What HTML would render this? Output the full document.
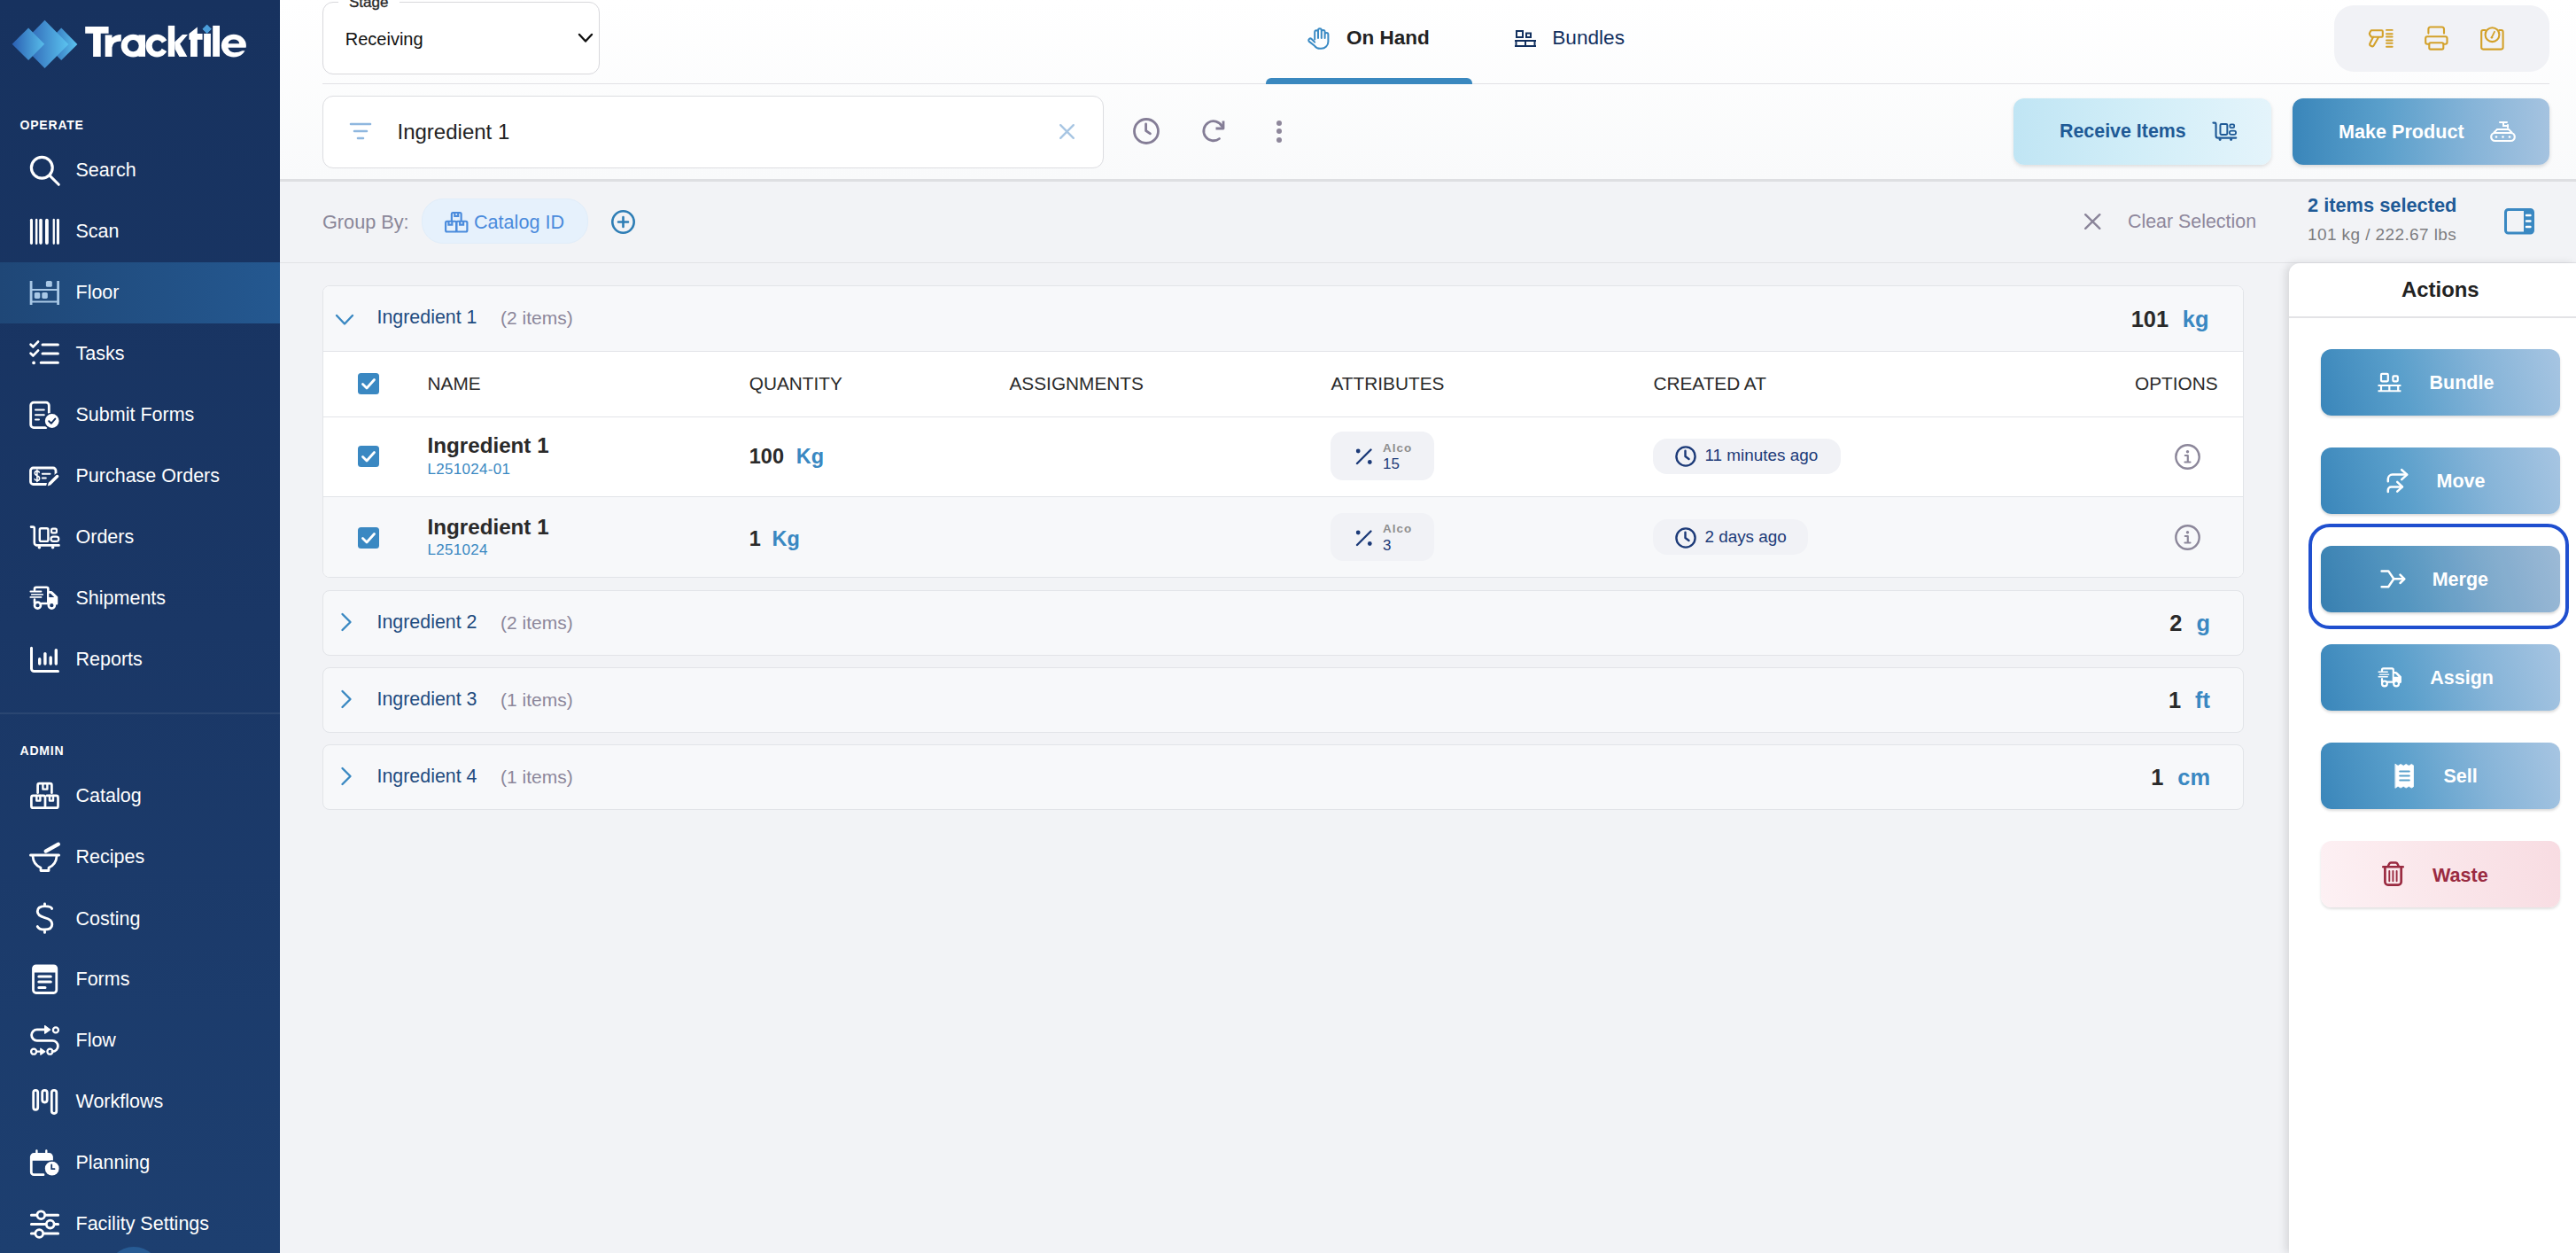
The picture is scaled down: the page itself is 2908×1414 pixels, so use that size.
<!DOCTYPE html>
<html><head><meta charset="utf-8"><style>
html,body{margin:0;padding:0;width:2908px;height:1414px;overflow:hidden;background:#f2f3f6;font-family:"Liberation Sans",sans-serif}
.t{position:absolute;line-height:1;white-space:nowrap}
svg{overflow:visible}
</style></head><body>
<div style="position:absolute;left:0.00px;top:0.00px;width:316.00px;height:1414.00px;background:linear-gradient(180deg,#17325f 0%,#1a3766 50%,#1d3f70 100%)"></div><div style="position:absolute;left:316.00px;top:0.00px;width:2592.00px;height:202.00px;background:linear-gradient(180deg,#ffffff 0%,#f9fafb 100%)"></div><div style="position:absolute;left:316.00px;top:202.00px;width:2592.00px;height:3.00px;background:#dedfe2"></div><div style="position:absolute;left:316.00px;top:205.00px;width:2592.00px;height:1209.00px;background:#f2f3f6"></div><div style="position:absolute;left:316.00px;top:296.00px;width:2592.00px;height:1.00px;background:#e1e2e6"></div><div style="position:absolute;left:0.00px;top:296.00px;width:316.00px;height:69.00px;background:linear-gradient(90deg,#1f4777 0%,#245890 100%)"></div><div style="position:absolute;left:0.00px;top:804.00px;width:316.00px;height:2.00px;background:rgba(255,255,255,0.07)"></div><svg style="position:absolute;left:0;top:0" width="100" height="90" viewBox="0 0 100 90">
<defs>
<linearGradient id="lgA" gradientUnits="userSpaceOnUse" x1="13.6" y1="0" x2="50.2" y2="0"><stop offset="0" stop-color="#2a5fb2"/><stop offset="1" stop-color="#58bdea"/></linearGradient>
<linearGradient id="lgB" gradientUnits="userSpaceOnUse" x1="30" y1="0" x2="77.3" y2="0"><stop offset="0" stop-color="#2e63b4"/><stop offset="1" stop-color="#5bc3ef"/></linearGradient>
<linearGradient id="lgC" gradientUnits="userSpaceOnUse" x1="60" y1="0" x2="87.4" y2="0"><stop offset="0" stop-color="#3475bd"/><stop offset="1" stop-color="#5cc4f0"/></linearGradient>
</defs>
<path d="M69.2 31.5 L87.4 49.9 L69.2 68.1 L51 49.9 Z" fill="url(#lgC)"/>
<path d="M50.5 22.8 L77.3 49.9 L50.5 77 L23.7 49.9 Z" fill="url(#lgB)"/>
<path d="M32.1 31.5 L50.2 49.8 L32.1 68.1 L13.6 49.8 Z" fill="url(#lgA)"/>
<path d="M233.6 27.8 L238.6 32.8 L233.6 37.8 L228.6 32.8 Z" fill="#4a9edb"/>
</svg><svg style="position:absolute;left:0;top:0" width="300" height="90" viewBox="0 0 300 90" fill="#fff">
<path d="M96.2 29.9 H122.6 V37.7 H113.7 V63.9 H105.1 V37.7 H96.2 Z"/>
<path d="M118.7 63.9 V39.4 H126.5 V42.8 Q129.8 38.9 136.8 38.9 V46.6 Q127.2 46.4 126.5 53.5 V63.9 Z"/>
<ellipse cx="150.3" cy="51.7" rx="13.6" ry="12.9"/><rect x="156.4" y="39.4" width="7.6" height="24.5"/>
<ellipse cx="150.3" cy="51.7" rx="6.4" ry="6.6" fill="#17325f"/>
<ellipse cx="177.2" cy="51.7" rx="12.6" ry="12.9"/><ellipse cx="177.6" cy="51.7" rx="5.9" ry="6.5" fill="#17325f"/>
<path d="M177.6 51.7 L192 43.2 V60.2 Z" fill="#17325f"/>
<rect x="189.8" y="28.9" width="7.4" height="35"/>
<path d="M197.1 47.6 L206 39 H212 L203.2 49.6 L211.4 63.9 H202.4 L197.6 55.6 Z"/>
<path d="M213.4 37.9 L222.8 30.5 V37.9 H228.6 V44.8 H222.8 V63.9 H215 V44.8 H213.4 Z"/>
<rect x="230.1" y="37.9" width="7.8" height="26"/>
<path d="M233.6 27.8 L238.6 32.8 L233.6 37.8 L228.6 32.8 Z" fill="#4a9edb"/>
<rect x="240.2" y="28.9" width="7.8" height="35"/>
<ellipse cx="263.9" cy="51.6" rx="14" ry="12.9"/>
<path d="M257.6 49.2 Q258.4 44.6 263.9 44.6 Q269.4 44.6 270.2 49.2 Z" fill="#17325f"/>
<path d="M257.4 53.8 H279 V57.2 H273.4 Q270 59.3 264.6 59.3 Q259 59 257.4 53.8 Z" fill="#17325f"/>
</svg><div class="t " style="left:22.50px;top:134.15px;font-size:14px;color:#ffffff;font-weight:700;letter-spacing:0.8px">OPERATE</div><div class="t " style="left:22.50px;top:840.15px;font-size:14px;color:#ffffff;font-weight:700;letter-spacing:0.8px">ADMIN</div><div class="t " style="left:85.50px;top:182.00px;font-size:21.5px;color:#ffffff;font-weight:400;">Search</div><div class="t " style="left:85.50px;top:251.00px;font-size:21.5px;color:#ffffff;font-weight:400;">Scan</div><div class="t " style="left:85.50px;top:320.00px;font-size:21.5px;color:#ffffff;font-weight:400;">Floor</div><div class="t " style="left:85.50px;top:389.00px;font-size:21.5px;color:#ffffff;font-weight:400;">Tasks</div><div class="t " style="left:85.50px;top:458.00px;font-size:21.5px;color:#ffffff;font-weight:400;">Submit Forms</div><div class="t " style="left:85.50px;top:527.00px;font-size:21.5px;color:#ffffff;font-weight:400;">Purchase Orders</div><div class="t " style="left:85.50px;top:596.00px;font-size:21.5px;color:#ffffff;font-weight:400;">Orders</div><div class="t " style="left:85.50px;top:665.00px;font-size:21.5px;color:#ffffff;font-weight:400;">Shipments</div><div class="t " style="left:85.50px;top:734.00px;font-size:21.5px;color:#ffffff;font-weight:400;">Reports</div><div class="t " style="left:85.50px;top:888.00px;font-size:21.5px;color:#ffffff;font-weight:400;">Catalog</div><div class="t " style="left:85.50px;top:957.00px;font-size:21.5px;color:#ffffff;font-weight:400;">Recipes</div><div class="t " style="left:85.50px;top:1026.50px;font-size:21.5px;color:#ffffff;font-weight:400;">Costing</div><div class="t " style="left:85.50px;top:1095.00px;font-size:21.5px;color:#ffffff;font-weight:400;">Forms</div><div class="t " style="left:85.50px;top:1164.00px;font-size:21.5px;color:#ffffff;font-weight:400;">Flow</div><div class="t " style="left:85.50px;top:1233.00px;font-size:21.5px;color:#ffffff;font-weight:400;">Workflows</div><div class="t " style="left:85.50px;top:1302.00px;font-size:21.5px;color:#ffffff;font-weight:400;">Planning</div><div class="t " style="left:85.50px;top:1371.00px;font-size:21.5px;color:#ffffff;font-weight:400;">Facility Settings</div><div style="position:absolute;left:364.00px;top:2.00px;width:313.00px;height:81.50px;box-sizing:border-box;border:1.5px solid #d8d8dc;border-radius:12px;background:#fff"></div><div style="position:absolute;left:382.00px;top:0.00px;width:69.00px;height:6.00px;background:linear-gradient(180deg,#ffffff,#ffffff)"></div><div class="t " style="left:394.00px;top:-5.89px;font-size:17px;color:#2a2a2a;font-weight:400;-webkit-text-stroke:0.35px #2a2a2a">Stage</div><div class="t " style="left:389.75px;top:33.82px;font-size:20px;color:#111;font-weight:400;">Receiving</div><svg style="position:absolute;left:653.00px;top:38.00px;" width="16.00" height="10.00" viewBox="0 0 16 10" fill="none"><path d="M1 1 L8 8.5 L15 1" stroke="#111" stroke-width="2.4" stroke-linecap="round" stroke-linejoin="round"/></svg><div style="position:absolute;left:364.00px;top:94.00px;width:2514.00px;height:1.00px;background:#e2e2e5"></div><div style="position:absolute;left:1429.00px;top:88.00px;width:233.00px;height:6.50px;background:#3a88bf;border-radius:6px 6px 0 0"></div><svg style="position:absolute;left:1476.00px;top:31.00px;" width="25.00" height="25.00" viewBox="0 0 25 25" fill="none"><path d="M8.2 13.5 V5.2 a1.9 1.9 0 0 1 3.8 0 V12 V3.2 a1.9 1.9 0 0 1 3.8 0 V12 V4.8 a1.9 1.9 0 0 1 3.8 0 V12 V8 a1.9 1.9 0 0 1 3.8 0 V16 a7.8 7.8 0 0 1 -7.8 7.8 h-1.5 a7.5 7.5 0 0 1 -6 -3 L1.6 15.6 a2 2 0 0 1 3 -2.6 L8.2 16.6" stroke="#3a8ac4" stroke-width="2" stroke-linecap="round" stroke-linejoin="round"/></svg><div class="t " style="left:1520.00px;top:32.35px;font-size:22.5px;color:#222;font-weight:700;">On Hand</div><svg style="position:absolute;left:1710.00px;top:33.50px;" width="24.00" height="19.00" viewBox="0 0 24 19" fill="none"><rect x="2" y="1" width="7" height="7" stroke="#12305f" stroke-width="2"/><rect x="13" y="3.5" width="5" height="4.5" stroke="#12305f" stroke-width="2"/><path d="M0 12 H24 M0 18 H24 M1.5 12 V18 M12 12 V18 M22.5 12 V18" stroke="#12305f" stroke-width="2"/></svg><div class="t " style="left:1752.30px;top:32.26px;font-size:22.6px;color:#12305f;font-weight:400;">Bundles</div><div style="position:absolute;left:2635.00px;top:6.00px;width:243.00px;height:74.50px;background:#f1f2f6;border-radius:22px"></div><svg style="position:absolute;left:2660px;top:25px" width="180" height="40" viewBox="2660 25 180 40" fill="none" stroke="#d3a12a" stroke-width="2.1" stroke-linejoin="round" stroke-linecap="round">
<path d="M2676.8 34.3 H2688.6 a1.2 1.2 0 0 1 1.2 1.2 V40.6 a1.2 1.2 0 0 1 -1.2 1.2 H2677.2 L2675.4 39.5 a2.5 2.5 0 0 1 0 -3 Z"/>
<path d="M2679 41.8 L2675.3 49.3 a1.6 1.6 0 0 0 0.8 2.2 L2677.6 52.2 a1.6 1.6 0 0 0 2 -0.7 L2684.8 42.4"/>
<path d="M2694 33.9 H2700.7 M2694 38.2 H2700.7 M2694 41.5 H2700.7 M2694 45.5 H2700.7 M2694 48.8 H2700.7 M2694 52.7 H2700.7" stroke-width="1.9"/>
<path d="M2741.4 37.6 V33 a2.5 2.5 0 0 1 2.5 -2.5 H2756.5 a2.5 2.5 0 0 1 2.5 2.5 V37.6"/>
<path d="M2741.6 49.7 H2740.2 a2 2 0 0 1 -2 -2 V43.3 a2 2 0 0 1 2 -2 H2760.5 a2 2 0 0 1 2 2 V47.7 a2 2 0 0 1 -2 2 H2758.7"/>
<rect x="2742.3" y="48.2" width="16" height="7.4" rx="1.6"/>
<path d="M2805.7 34 H2803.2 a2 2 0 0 0 -2 2 V53.6 a2 2 0 0 0 2 2 H2823.6 a2 2 0 0 0 2 -2 V36 a2 2 0 0 0 -2 -2 H2821.3"/>
<circle cx="2813.5" cy="39.2" r="7.9"/>
<path d="M2812.8 42.3 L2816 35.8" stroke-width="1.8"/><circle cx="2812.9" cy="42.3" r="1.3" fill="#d3a12a" stroke="none"/>
</svg><div style="position:absolute;left:364.00px;top:107.50px;width:882.00px;height:82.00px;box-sizing:border-box;border:1.5px solid #dcdde1;border-radius:12px;background:#fff"></div><svg style="position:absolute;left:395.00px;top:138.00px;" width="24.00" height="20.00" viewBox="0 0 24 20" fill="none"><path d="M1 2 H23 M5 10 H19 M9 18 H15" stroke="#8fb7df" stroke-width="2.6" stroke-linecap="round"/></svg><div class="t " style="left:448.50px;top:137.18px;font-size:24px;color:#222;font-weight:400;">Ingredient 1</div><svg style="position:absolute;left:1196.00px;top:140.00px;" width="17.00" height="17.00" viewBox="0 0 17 17" fill="none"><path d="M1.2 1.2 L15.8 15.8 M15.8 1.2 L1.2 15.8" stroke="#a8c6e3" stroke-width="2.4" stroke-linecap="round"/></svg><svg style="position:absolute;left:1279.00px;top:133.00px;" width="30.00" height="30.00" viewBox="0 0 30 30" fill="none"><circle cx="15" cy="15" r="13.5" stroke="#847d96" stroke-width="2.8"/><path d="M14.6 7 V14.5 L19.5 17.8" stroke="#847d96" stroke-width="2.8" stroke-linecap="round" stroke-linejoin="round"/></svg><svg style="position:absolute;left:1357.00px;top:136.00px;" width="26.00" height="25.00" viewBox="0 0 26 25" fill="none"><path d="M19.5 20.5 A11 11 0 1 1 22.5 6.5" stroke="#847d96" stroke-width="2.8" stroke-linecap="round"/><path d="M24 0.5 V9 H15.5" stroke="#847d96" stroke-width="2.8" stroke-linejoin="round"/></svg><div style="position:absolute;left:1441.00px;top:135.50px;width:6.00px;height:6.00px;background:#8e879b;border-radius:50%"></div><div style="position:absolute;left:1441.00px;top:145.00px;width:6.00px;height:6.00px;background:#8e879b;border-radius:50%"></div><div style="position:absolute;left:1441.00px;top:154.50px;width:6.00px;height:6.00px;background:#8e879b;border-radius:50%"></div><div style="position:absolute;left:2273.00px;top:111.00px;width:291.00px;height:75.00px;border-radius:12px;background:linear-gradient(90deg,#c0e5f4 0%,#d2eef8 50%,#e4f4fb 100%);box-shadow:0 2px 4px rgba(0,0,0,0.12)"></div><div class="t " style="left:2325.00px;top:138.13px;font-size:21.4px;color:#1f5a96;font-weight:700;">Receive Items</div><svg style="position:absolute;left:2480px;top:125px" width="60" height="45" viewBox="2480 125 60 45" fill="none" stroke="#1f5a96" stroke-linecap="round" stroke-linejoin="round"><g transform="translate(2498.1 138.4) scale(0.82) translate(-34.6 -594.4)"><path d="M35 594.6 H37.2 a1.6 1.6 0 0 1 1.6 1.6 V612.4 a3 3 0 0 0 3 3 H66.5" stroke-width="2.6"/><rect x="44.8" y="596.3" width="9.6" height="14.6" rx="1.6" stroke-width="2.4"/><rect x="58.1" y="596.7" width="5.8" height="4.6" rx="1.4" stroke-width="2.2"/><rect x="57.5" y="605.7" width="8.8" height="5.2" rx="2.6" stroke-width="2.2"/><circle cx="44.4" cy="617.8" r="1.8" fill="#1f5a96" stroke="none"/><circle cx="59.6" cy="617.8" r="1.8" fill="#1f5a96" stroke="none"/></g></svg><div style="position:absolute;left:2588.00px;top:111.00px;width:290.00px;height:75.00px;border-radius:12px;background:linear-gradient(90deg,#3a86ba 0%,#5a9fcb 35%,#86b4d8 70%,#a5c3e0 100%);box-shadow:0 2px 4px rgba(0,0,0,0.15)"></div><div class="t " style="left:2640.00px;top:137.96px;font-size:21.6px;color:#fff;font-weight:700;">Make Product</div><svg style="position:absolute;left:2811.00px;top:137.00px;" width="29.00" height="23.00" viewBox="0 0 29 23" fill="none"><path d="M11 1 H19 M15 1 V5 H20 M20 4 V7" stroke="#fff" stroke-width="2" stroke-linecap="round"/><rect x="1.2" y="13" width="26.6" height="9" rx="4.5" stroke="#fff" stroke-width="2.2"/><path d="M4 13 L8 9 H21 L25 13" stroke="#fff" stroke-width="2"/><circle cx="7" cy="17.5" r="1.3" fill="#fff"/><circle cx="14.5" cy="17.5" r="1.3" fill="#fff"/><circle cx="22" cy="17.5" r="1.3" fill="#fff"/></svg><div class="t " style="left:364.00px;top:239.63px;font-size:21.7px;color:#8a8799;font-weight:400;">Group By:</div><div style="position:absolute;left:476.00px;top:224.00px;width:187.50px;height:51.00px;box-sizing:border-box;background:#e6f1fc;border:1.5px solid #e1edf9;border-radius:24px"></div><svg style="position:absolute;left:502.00px;top:239.00px;" width="26.50" height="23.50" viewBox="0 0 27 24" fill="none"><path d="M8 11 V2.5 a1.5 1.5 0 0 1 1.5 -1.5 H17.5 a1.5 1.5 0 0 1 1.5 1.5 V11" stroke="#4a8bdc" stroke-width="2.2"/><path d="M11.5 1 V5 H15.5 V1" stroke="#4a8bdc" stroke-width="2.2"/><rect x="1.1" y="11" width="12.4" height="12" rx="1.5" stroke="#4a8bdc" stroke-width="2.2"/><rect x="13.5" y="11" width="12.4" height="12" rx="1.5" stroke="#4a8bdc" stroke-width="2.2"/><path d="M4.5 11 V15 H8.5 V11 M17.5 11 V15 H21.5 V11" stroke="#4a8bdc" stroke-width="2.2"/></svg><div class="t " style="left:535.00px;top:239.71px;font-size:21.6px;color:#4a8bdc;font-weight:400;">Catalog ID</div><svg style="position:absolute;left:690.00px;top:237.00px;" width="27.00" height="27.00" viewBox="0 0 27 27" fill="none"><circle cx="13.5" cy="13.5" r="12.2" stroke="#2e7db5" stroke-width="2.6"/><path d="M13.5 8 V19 M8 13.5 H19" stroke="#2e7db5" stroke-width="2.6" stroke-linecap="round"/></svg><svg style="position:absolute;left:2353.00px;top:241.00px;" width="18.50" height="18.00" viewBox="0 0 18.5 18" fill="none"><path d='M1.2 1.2 L17.3 16.8 M17.3 1.2 L1.2 16.8' stroke='#8a8499' stroke-width='2.4' stroke-linecap='round'/></svg><div class="t " style="left:2402.00px;top:239.88px;font-size:21.4px;color:#8e879c;font-weight:400;">Clear Selection</div><div class="t " style="left:2605.00px;top:220.79px;font-size:21.8px;color:#1f5a96;font-weight:700;">2 items selected</div><div class="t " style="left:2605.00px;top:255.16px;font-size:19px;color:#7d7d80;font-weight:400;letter-spacing:0.4px">101 kg / 222.67 lbs</div><svg style="position:absolute;left:2827.00px;top:235.00px;" width="34.00" height="29.50" viewBox="0 0 34 29.5" fill="none"><rect x="1.5" y="1.5" width="31" height="26.5" rx="3" stroke="#3a88c2" stroke-width="3"/><path d="M22 1.5 V28 H30 a3 3 0 0 0 3 -3 V4.5 a3 3 0 0 0 -3 -3 Z" fill="#3a88c2"/><path d="M25 8 H29.5 M25 14.5 H29.5 M25 21 H29.5" stroke="#fff" stroke-width="2.4" stroke-linecap="round"/></svg><div style="position:absolute;left:2584.00px;top:297.00px;width:324.00px;height:1117.00px;background:#fff;border-top-left-radius:12px;box-shadow:-4px 0 10px rgba(0,0,0,0.11)"></div><div class="t " style="left:2711.00px;top:315.46px;font-size:23.9px;color:#222;font-weight:700;">Actions</div><div style="position:absolute;left:2584.00px;top:357.00px;width:324.00px;height:1.50px;background:#e3e3e6"></div><div style="position:absolute;left:2620.00px;top:394.00px;width:270.00px;height:75.00px;border-radius:12px;background:linear-gradient(75deg,#3a86ba 0%,#5a9fcb 35%,#86b4d8 68%,#a7c5e2 100%);box-shadow:0 2px 3px rgba(0,0,0,0.15)"></div><div class="t " style="left:2742.50px;top:421.80px;font-size:21.5px;color:#fff;font-weight:700;">Bundle</div><div style="position:absolute;left:2620.00px;top:505.00px;width:270.00px;height:75.00px;border-radius:12px;background:linear-gradient(75deg,#3a86ba 0%,#5a9fcb 35%,#86b4d8 68%,#a7c5e2 100%);box-shadow:0 2px 3px rgba(0,0,0,0.15)"></div><div class="t " style="left:2750.50px;top:532.80px;font-size:21.5px;color:#fff;font-weight:700;">Move</div><div style="position:absolute;left:2620.00px;top:616.00px;width:270.00px;height:75.00px;border-radius:12px;background:linear-gradient(75deg,#3a86ba 0%,#5a9fcb 35%,#86b4d8 68%,#a7c5e2 100%);box-shadow:0 2px 3px rgba(0,0,0,0.15)"></div><div style="position:absolute;left:2620.00px;top:616.00px;width:270.00px;height:75.00px;border-radius:12px;background:rgba(30,40,60,0.07)"></div><div class="t " style="left:2745.70px;top:643.80px;font-size:21.5px;color:#fff;font-weight:700;">Merge</div><div style="position:absolute;left:2620.00px;top:727.00px;width:270.00px;height:75.00px;border-radius:12px;background:linear-gradient(75deg,#3a86ba 0%,#5a9fcb 35%,#86b4d8 68%,#a7c5e2 100%);box-shadow:0 2px 3px rgba(0,0,0,0.15)"></div><div class="t " style="left:2743.30px;top:754.80px;font-size:21.5px;color:#fff;font-weight:700;">Assign</div><div style="position:absolute;left:2620.00px;top:838.00px;width:270.00px;height:75.00px;border-radius:12px;background:linear-gradient(75deg,#3a86ba 0%,#5a9fcb 35%,#86b4d8 68%,#a7c5e2 100%);box-shadow:0 2px 3px rgba(0,0,0,0.15)"></div><div class="t " style="left:2758.50px;top:865.80px;font-size:21.5px;color:#fff;font-weight:700;">Sell</div><div style="position:absolute;left:2620.00px;top:949.00px;width:270.00px;height:75.00px;border-radius:12px;background:linear-gradient(75deg,#fdf1f4 0%,#fae6ea 50%,#f8dce2 100%);box-shadow:0 2px 3px rgba(0,0,0,0.12)"></div><div class="t " style="left:2746.00px;top:976.71px;font-size:21.6px;color:#9a2b41;font-weight:700;">Waste</div><div style="position:absolute;left:2606.00px;top:591.00px;width:293.50px;height:119.00px;box-sizing:border-box;border:4.5px solid #1f4fcf;border-radius:24px"></div><div style="position:absolute;left:364.00px;top:321.50px;width:2169.00px;height:330.50px;box-sizing:border-box;border:1.5px solid #e2e4e8;border-radius:8px;background:#fff;overflow:hidden"><div style="position:absolute;left:0;top:0;right:0;height:73px;background:#f7f8fa;border-bottom:1.5px solid #e2e4e8"></div><div style="position:absolute;left:0;top:147px;right:0;height:1.5px;background:#e2e4e8"></div><div style="position:absolute;left:0;top:237.5px;right:0;bottom:0;background:#f7f8fa;border-top:1.5px solid #e2e4e8"></div></div><svg style="position:absolute;left:379.00px;top:354.50px;" width="20.00" height="12.00" viewBox="0 0 20 12" fill="none"><path d="M1 1 L10 10.5 L19 1" stroke="#3a88c2" stroke-width="2.4" stroke-linecap="round" stroke-linejoin="round"/></svg><div class="t " style="left:425.50px;top:348.13px;font-size:21.4px;color:#1f4c80;font-weight:400;">Ingredient 1</div><div class="t " style="left:565.00px;top:348.47px;font-size:21px;color:#8c879a;font-weight:400;">(2 items)</div><div class="t " style="left:2405.70px;top:347.69px;font-size:25.4px;color:#2a2a2a;font-weight:700;">101</div><div class="t " style="left:2463.80px;top:347.69px;font-size:25.4px;color:#3a88c2;font-weight:700;">kg</div><svg style="position:absolute;left:404.00px;top:421.00px;" width="24.00" height="24.00" viewBox="0 0 24 24" fill="none"><rect x="0" y="0" width="24" height="24" rx="3.5" fill="#3a88c2"/><path d="M5.5 12.5 L10 17 L18.5 7.5" stroke="#fff" stroke-width="2.8" stroke-linecap="round" stroke-linejoin="round"/></svg><div class="t " style="left:482.50px;top:422.89px;font-size:20.8px;color:#2a2a2a;font-weight:400;">NAME</div><div class="t " style="left:845.75px;top:422.89px;font-size:20.8px;color:#2a2a2a;font-weight:400;">QUANTITY</div><div class="t " style="left:1139.50px;top:422.89px;font-size:20.8px;color:#2a2a2a;font-weight:400;">ASSIGNMENTS</div><div class="t " style="left:1502.50px;top:422.89px;font-size:20.8px;color:#2a2a2a;font-weight:400;">ATTRIBUTES</div><div class="t " style="left:1866.40px;top:422.89px;font-size:20.8px;color:#2a2a2a;font-weight:400;">CREATED AT</div><div class="t " style="left:2410.00px;top:422.89px;font-size:20.8px;color:#2a2a2a;font-weight:400;">OPTIONS</div><svg style="position:absolute;left:404.00px;top:503.00px;" width="24.00" height="24.00" viewBox="0 0 24 24" fill="none"><rect x="0" y="0" width="24" height="24" rx="3.5" fill="#3a88c2"/><path d="M5.5 12.5 L10 17 L18.5 7.5" stroke="#fff" stroke-width="2.8" stroke-linecap="round" stroke-linejoin="round"/></svg><div class="t " style="left:482.50px;top:490.76px;font-size:24.2px;color:#2a2a2a;font-weight:700;">Ingredient 1</div><div class="t " style="left:482.50px;top:520.61px;font-size:17px;color:#3a88c2;font-weight:400;letter-spacing:0.3px">L251024-01</div><div class="t " style="left:845.75px;top:503.85px;font-size:23.5px;color:#2a2a2a;font-weight:700;">100</div><div class="t " style="left:898.75px;top:503.85px;font-size:23.5px;color:#3a88c2;font-weight:700;">Kg</div><div style="position:absolute;left:1502.00px;top:487.00px;width:117.00px;height:54.50px;background:#f1f2f6;border-radius:14px"></div><svg style="position:absolute;left:1529.50px;top:505.75px;" width="19.50" height="18.50" viewBox="0 0 19.5 18.5" fill="none"><path d="M17.5 1.5 L2 17" stroke="#1c3a78" stroke-width="2.4" stroke-linecap="round"/><circle cx="3.2" cy="3" r="2.4" fill="#1c3a78"/><circle cx="16.3" cy="15.5" r="2.4" fill="#1c3a78"/></svg><div class="t " style="left:1561.00px;top:498.57px;font-size:13.5px;color:#8e8e8e;font-weight:700;letter-spacing:1px">Alco</div><div class="t " style="left:1561.00px;top:515.11px;font-size:17px;color:#1c3a78;font-weight:400;">15</div><div style="position:absolute;left:1866.40px;top:494.50px;width:211.20px;height:40.00px;background:#f1f2f6;border-radius:16px"></div><svg style="position:absolute;left:1891.00px;top:503.00px;" width="24.00" height="24.00" viewBox="0 0 24 24" fill="none"><circle cx="12" cy="12" r="10.6" stroke="#1c3a78" stroke-width="2.4"/><path d="M11.5 5.8 V12 L15.5 15" stroke="#1c3a78" stroke-width="2.4" stroke-linecap="round" stroke-linejoin="round"/></svg><div class="t " style="left:1924.40px;top:505.20px;font-size:18.9px;color:#1c3a78;font-weight:400;">11 minutes ago</div><svg style="position:absolute;left:2454.50px;top:500.50px;" width="29.00" height="29.00" viewBox="0 0 29 29" fill="none"><circle cx="14.5" cy="14.5" r="13.2" stroke="#8c879a" stroke-width="2.4"/><circle cx="14.5" cy="8.8" r="1.7" fill="#8c879a"/><path d="M11.8 13 H14.8 V20.5 M11.5 20.5 H17.5" stroke="#8c879a" stroke-width="2.2" stroke-linecap="round" stroke-linejoin="round"/></svg><svg style="position:absolute;left:404.00px;top:594.80px;" width="24.00" height="24.00" viewBox="0 0 24 24" fill="none"><rect x="0" y="0" width="24" height="24" rx="3.5" fill="#3a88c2"/><path d="M5.5 12.5 L10 17 L18.5 7.5" stroke="#fff" stroke-width="2.8" stroke-linecap="round" stroke-linejoin="round"/></svg><div class="t " style="left:482.50px;top:582.56px;font-size:24.2px;color:#2a2a2a;font-weight:700;">Ingredient 1</div><div class="t " style="left:482.50px;top:612.41px;font-size:17px;color:#3a88c2;font-weight:400;letter-spacing:0.3px">L251024</div><div class="t " style="left:845.75px;top:596.65px;font-size:23.5px;color:#2a2a2a;font-weight:700;">1</div><div class="t " style="left:871.50px;top:596.65px;font-size:23.5px;color:#3a88c2;font-weight:700;">Kg</div><div style="position:absolute;left:1502.00px;top:578.80px;width:117.00px;height:54.50px;background:#f1f2f6;border-radius:14px"></div><svg style="position:absolute;left:1529.50px;top:597.55px;" width="19.50" height="18.50" viewBox="0 0 19.5 18.5" fill="none"><path d="M17.5 1.5 L2 17" stroke="#1c3a78" stroke-width="2.4" stroke-linecap="round"/><circle cx="3.2" cy="3" r="2.4" fill="#1c3a78"/><circle cx="16.3" cy="15.5" r="2.4" fill="#1c3a78"/></svg><div class="t " style="left:1561.00px;top:590.37px;font-size:13.5px;color:#8e8e8e;font-weight:700;letter-spacing:1px">Alco</div><div class="t " style="left:1561.00px;top:606.91px;font-size:17px;color:#1c3a78;font-weight:400;">3</div><div style="position:absolute;left:1866.40px;top:586.30px;width:174.20px;height:40.00px;background:#f1f2f6;border-radius:16px"></div><svg style="position:absolute;left:1891.00px;top:594.80px;" width="24.00" height="24.00" viewBox="0 0 24 24" fill="none"><circle cx="12" cy="12" r="10.6" stroke="#1c3a78" stroke-width="2.4"/><path d="M11.5 5.8 V12 L15.5 15" stroke="#1c3a78" stroke-width="2.4" stroke-linecap="round" stroke-linejoin="round"/></svg><div class="t " style="left:1924.40px;top:597.00px;font-size:18.9px;color:#1c3a78;font-weight:400;">2 days ago</div><svg style="position:absolute;left:2454.50px;top:592.30px;" width="29.00" height="29.00" viewBox="0 0 29 29" fill="none"><circle cx="14.5" cy="14.5" r="13.2" stroke="#8c879a" stroke-width="2.4"/><circle cx="14.5" cy="8.8" r="1.7" fill="#8c879a"/><path d="M11.8 13 H14.8 V20.5 M11.5 20.5 H17.5" stroke="#8c879a" stroke-width="2.2" stroke-linecap="round" stroke-linejoin="round"/></svg><div style="position:absolute;left:364.00px;top:665.50px;width:2169.00px;height:74.00px;box-sizing:border-box;border:1.5px solid #e2e4e8;border-radius:8px;background:#f7f8fa"></div><svg style="position:absolute;left:385.00px;top:692.00px;" width="12.00" height="20.00" viewBox="0 0 12 20" fill="none"><path d="M1.5 1 L10.5 10 L1.5 19" stroke="#3a88c2" stroke-width="2.4" stroke-linecap="round" stroke-linejoin="round"/></svg><div class="t " style="left:425.50px;top:691.88px;font-size:21.4px;color:#1f4c80;font-weight:400;">Ingredient 2</div><div class="t " style="left:565.00px;top:692.22px;font-size:21px;color:#8c879a;font-weight:400;">(2 items)</div><div class="t" style="right:413px;top:691.19px;font-size:25.4px;font-weight:700;color:#2a2a2a">2<span style="color:#3a88c2;margin-left:16px">g</span></div><div style="position:absolute;left:364.00px;top:752.50px;width:2169.00px;height:74.00px;box-sizing:border-box;border:1.5px solid #e2e4e8;border-radius:8px;background:#f7f8fa"></div><svg style="position:absolute;left:385.00px;top:779.00px;" width="12.00" height="20.00" viewBox="0 0 12 20" fill="none"><path d="M1.5 1 L10.5 10 L1.5 19" stroke="#3a88c2" stroke-width="2.4" stroke-linecap="round" stroke-linejoin="round"/></svg><div class="t " style="left:425.50px;top:778.88px;font-size:21.4px;color:#1f4c80;font-weight:400;">Ingredient 3</div><div class="t " style="left:565.00px;top:779.22px;font-size:21px;color:#8c879a;font-weight:400;">(1 items)</div><div class="t" style="right:413px;top:778.19px;font-size:25.4px;font-weight:700;color:#2a2a2a">1<span style="color:#3a88c2;margin-left:16px">ft</span></div><div style="position:absolute;left:364.00px;top:839.50px;width:2169.00px;height:74.00px;box-sizing:border-box;border:1.5px solid #e2e4e8;border-radius:8px;background:#f7f8fa"></div><svg style="position:absolute;left:385.00px;top:866.00px;" width="12.00" height="20.00" viewBox="0 0 12 20" fill="none"><path d="M1.5 1 L10.5 10 L1.5 19" stroke="#3a88c2" stroke-width="2.4" stroke-linecap="round" stroke-linejoin="round"/></svg><div class="t " style="left:425.50px;top:865.88px;font-size:21.4px;color:#1f4c80;font-weight:400;">Ingredient 4</div><div class="t " style="left:565.00px;top:866.22px;font-size:21px;color:#8c879a;font-weight:400;">(1 items)</div><div class="t" style="right:413px;top:865.19px;font-size:25.4px;font-weight:700;color:#2a2a2a">1<span style="color:#3a88c2;margin-left:16px">cm</span></div><svg style="position:absolute;left:0;top:0" width="316" height="1414" viewBox="0 0 316 1414" fill="none" stroke="#fff" stroke-linecap="round" stroke-linejoin="round"><circle cx="47.3" cy="189.3" r="11.9" stroke-width="3.2"/><path d="M56.6 198.6 L66.3 208.3" stroke-width="3"/><rect x="33.9" y="246.8" width="3.10" height="29.1" rx="1.55" fill="#fff" stroke="none"/><rect x="39.9" y="246.8" width="2.50" height="29.1" rx="1.25" fill="#fff" stroke="none"/><rect x="44.2" y="246.8" width="3.60" height="29.1" rx="1.80" fill="#fff" stroke="none"/><rect x="51.0" y="246.8" width="3.80" height="29.1" rx="1.90" fill="#fff" stroke="none"/><rect x="59.6" y="246.8" width="2.30" height="29.1" rx="1.15" fill="#fff" stroke="none"/><rect x="63.9" y="246.8" width="3.10" height="29.1" rx="1.55" fill="#fff" stroke="none"/><g stroke="#a9c8e6"><path d="M35.1 317 V344 M65.6 317 V344" stroke-width="2.8" stroke-linecap="butt"/><path d="M35.1 327.1 H65.6 M35.1 340.6 H65.6" stroke-width="2" stroke-linecap="butt"/></g><g fill="#a9c8e6" stroke="none"><rect x="51.9" y="316.9" width="6.9" height="6.9" rx="1.6"/><rect x="38.8" y="330" width="6.5" height="6.9" rx="1.6"/><rect x="47.3" y="330" width="6.5" height="6.9" rx="1.6"/></g><path d="M34.6 388.8 L37.4 391.4 L43 385.6 M34.6 398.8 L37.4 401.4 L43 395.6" stroke-width="2.8"/><circle cx="38.1" cy="409.4" r="1.9" fill="#fff" stroke="none"/><path d="M48 389 H65.4 M48 399 H65.4 M46.2 409.3 H65.4" stroke-width="3"/><path d="M52 482.6 H38 a3.3 3.3 0 0 1 -3.3 -3.3 V457.5 a3.3 3.3 0 0 1 3.3 -3.3 H52 a3.3 3.3 0 0 1 3.3 3.3 V466" stroke-width="2.8"/><path d="M40 462.5 H49.8 M40 468.2 H49.8 M40 473.5 H44" stroke-width="2"/><circle cx="58.7" cy="475" r="9.6" fill="#17325f" stroke="none"/><circle cx="58.7" cy="475" r="7.9" fill="#fff" stroke="none"/><path d="M55.2 475.3 L57.8 477.8 L62.3 472.6" stroke="#17325f" stroke-width="2"/><path d="M52 546.5 H37.5 a3 3 0 0 1 -3 -3 V531 a3 3 0 0 1 3 -3 H60 a3 3 0 0 1 3 3 V536" stroke-width="2.8"/><path d="M47.8 534.8 H56.5 M47.8 539.6 H51.8" stroke-width="2"/><path d="M44.3 532.9 Q43.8 531.6 41.9 531.6 Q39.3 531.6 39.3 533.8 Q39.3 535.9 41.9 536.8 Q44.6 537.7 44.6 540 Q44.6 542.3 41.9 542.3 Q39.9 542.3 39.2 540.7 M41.9 530.4 V543.6" stroke-width="1.6"/><path d="M52.6 549.8 L54 544.5 L62.8 535.7 a2.5 2.5 0 0 1 3.6 3.6 L57.6 548.1 Z" fill="#fff" stroke="#17325f" stroke-width="1.6"/><path d="M35 594.6 H37.2 a1.6 1.6 0 0 1 1.6 1.6 V612.4 a3 3 0 0 0 3 3 H66.5" stroke-width="2.6"/><rect x="44.8" y="596.3" width="9.6" height="14.6" rx="1.6" stroke-width="2.4"/><rect x="58.1" y="596.7" width="5.8" height="4.6" rx="1.4" stroke-width="2.2"/><rect x="57.5" y="605.7" width="8.8" height="5.2" rx="2.6" stroke-width="2.2"/><circle cx="44.4" cy="617.8" r="1.8" fill="#fff" stroke="none"/><circle cx="59.6" cy="617.8" r="1.8" fill="#fff" stroke="none"/><g transform="translate(34.2 661.9) scale(1.2) translate(-2685 -753.7)"><path d="M2689 757 V756 a1.6 1.6 0 0 1 1.6 -1.6 H2700.2 a1.6 1.6 0 0 1 1.6 1.6 V768.5 M2689 766 V769.5 M2695.6 769.6 H2701.5" stroke-width="2.2"/><path d="M2685.2 758.3 H2695.2 M2685.2 763.7 H2695.2" stroke-width="1.6"/><path d="M2686.4 761.2 H2696.6" stroke-width="1.6" stroke="#e6ecf3"/><path d="M2701.6 758.6 H2704.3 a2 2 0 0 1 1.5 0.6 L2710.3 763.6 V769.8 a0.5 0.5 0 0 1 -0.5 0.5 H2701.6 Z" fill="#fff" stroke-width="1.2"/><path d="M2702.6 760.3 H2704 L2707.6 763.7 H2702.6 Z" fill="#1a3766" stroke="none"/><circle cx="2691.9" cy="771.4" r="2.9" fill="#1a3766" stroke-width="2.2"/><circle cx="2705.1" cy="771.4" r="2.9" fill="#1a3766" stroke-width="2.2"/></g><path d="M35.5 731.3 V754.5 a3 3 0 0 0 3 3 H65.5" stroke-width="3"/><path d="M44.7 743.8 V749 M50.9 737.6 V749 M57.2 742 V749 M63.3 733.6 V749" stroke-width="3.4"/><path d="M42.6 894.7 V886 a1.8 1.8 0 0 1 1.8 -1.8 H56.6 a1.8 1.8 0 0 1 1.8 1.8 V894.7" stroke-width="2.7"/><path d="M48.4 884.5 V890.6 H53.4 V884.5" stroke-width="2.4"/><rect x="35.4" y="897.9" width="15.6" height="13.8" rx="2" stroke-width="2.7"/><path d="M51 911.7 H63.5 a2 2 0 0 0 2 -2 V899.9 a2 2 0 0 0 -2 -2 H53" stroke-width="2.7"/><path d="M41.3 897.9 V903.6 H45.4 V897.9 M56 897.9 V903.6 H60 V897.9" stroke-width="2.4"/><path d="M51.6 960.6 L65.9 952.7" stroke-width="4.2"/><path d="M34.5 965 H66.5" stroke-width="3"/><path d="M37 966 Q37.5 975.5 46 979.3 V982.5 H55 V979.3 Q63.5 975.5 64 966" stroke-width="2.8"/><path d="M58.6 1025.4 Q57.4 1022.6 50.9 1022.6 Q42.3 1022.6 42.3 1028.6 Q42.3 1033.6 50.5 1035.6 Q58.8 1037.6 58.8 1043 Q58.8 1049 50.5 1049 Q43.8 1049 42.3 1045.6 M50.5 1020 V1022.6 M50.5 1049 V1052.4" stroke-width="2.9"/><rect x="37.5" y="1089.8" width="26.3" height="30.7" rx="3.2" stroke-width="2.8"/><rect x="37.5" y="1089.8" width="26.3" height="7.7" rx="1" fill="#fff" stroke="none"/><path d="M43.8 1102 H57.3 M43.8 1108 H57.3 M43.8 1114.4 H51" stroke-width="3"/><path d="M52 1161.9 H41.8 a6.2 6.2 0 0 0 0 12.4 H59.2 a6.2 6.2 0 0 1 0 12.4 H59" stroke-width="2.8"/><path d="M50.6 1157.6 L56.6 1161.9 L50.6 1166.2 Z" fill="#fff" stroke-width="1.2"/><circle cx="62.9" cy="1162.4" r="3" stroke-width="2.3"/><circle cx="38.1" cy="1186.7" r="3" stroke-width="2.3"/><circle cx="56.4" cy="1186.7" r="3" stroke-width="2.3"/><path d="M41.5 1186.7 H46" stroke-width="2.3"/><path d="M45.8 1183.2 L50.8 1186.7 L45.8 1190.2 Z" fill="#fff" stroke-width="1.2"/><rect x="37.7" y="1230.3" width="5" height="22" rx="2.5" stroke-width="2.8"/><rect x="47.7" y="1230.3" width="5.5" height="13.7" rx="2.7" stroke-width="2.8"/><rect x="58.3" y="1230.3" width="5.5" height="26.2" rx="2.7" stroke-width="2.8"/><path d="M49 1325.7 H38.3 a3 3 0 0 1 -3 -3 V1305.5 a3 3 0 0 1 3 -3 H55.5 a3 3 0 0 1 3 3 V1310" stroke-width="2.8"/><path d="M35.3 1306.3 H58.5" stroke-width="7" stroke-linecap="butt"/><path d="M41.4 1298.4 V1301.8 M52.3 1298.4 V1301.8" stroke-width="2.4"/><circle cx="58.7" cy="1318.7" r="9.4" fill="#1c3b6a" stroke="none"/><circle cx="58.7" cy="1318.7" r="7.9" fill="#fff" stroke="none"/><path d="M58.2 1314.5 V1319.2 H61.5" stroke="#1c3b6a" stroke-width="1.8"/><path d="M35.4 1371.2 H65.6 M35.4 1381.6 H65.6 M35.4 1392 H65.6" stroke-width="3"/><circle cx="46.3" cy="1371.2" r="4.4" fill="#1c3d6d" stroke-width="2.8"/><circle cx="56.7" cy="1381.6" r="4.4" fill="#1d3d6d" stroke-width="2.8"/><circle cx="44.3" cy="1392" r="4.4" fill="#1d3e6e" stroke-width="2.8"/></svg><div style="position:absolute;left:121.40px;top:1406.80px;width:60.00px;height:60.00px;background:#275b94;border-radius:50%"></div><svg style="position:absolute;left:2600px;top:380px" width="200" height="640" viewBox="2600 380 200 640" fill="none" stroke="#fff" stroke-linecap="round" stroke-linejoin="round">
<rect x="2688" y="421.9" width="7.8" height="8.4" rx="1" stroke-width="2.2"/>
<rect x="2701.4" y="424.4" width="5.4" height="5.9" rx="1" stroke-width="2.2"/>
<path d="M2684.5 435 H2710.4 M2684.5 441.2 H2710.4" stroke-width="2" stroke-linecap="butt"/>
<path d="M2688 435 V441.2 M2697.3 435 V441.2 M2707.2 435 V441.2" stroke-width="2.2" stroke-linecap="butt"/>
<path d="M2695.8 543.2 V540.6 a5 5 0 0 1 5 -5 H2716.9" stroke-width="2.5"/>
<path d="M2711.2 530.2 L2717.3 535.6 L2711.2 541.2" stroke-width="2.5"/>
<path d="M2695.8 554.9 V553 a3.5 3.5 0 0 1 3.5 -3.5 H2711.6" stroke-width="2.5"/>
<path d="M2706.2 543.8 L2712 549.3 L2706.2 554.6" stroke-width="2.5"/>
<path d="M2688.6 644.4 H2696.2 L2702.3 653.3 L2696.2 662.2 H2688.6 M2702.3 653.3 H2714" stroke-width="2.5"/>
<path d="M2709.5 648.6 L2714.3 653.3 L2709.5 658" stroke-width="2.5"/>
<path d="M2689 757 V756 a1.6 1.6 0 0 1 1.6 -1.6 H2700.2 a1.6 1.6 0 0 1 1.6 1.6 V768.5 M2689 766 V769.5 M2695.6 769.6 H2701.5" stroke-width="2.2"/><path d="M2685.2 758.3 H2695.2 M2685.2 763.7 H2695.2" stroke-width="1.6"/><path d="M2686.4 761.2 H2696.6" stroke-width="1.6" stroke="#e6eef6"/><path d="M2701.6 758.6 H2704.3 a2 2 0 0 1 1.5 0.6 L2710.3 763.6 V769.8 a0.5 0.5 0 0 1 -0.5 0.5 H2701.6 Z" fill="#fff" stroke-width="1.2"/><path d="M2702.6 760.3 H2704 L2707.6 763.7 H2702.6 Z" fill="#5aa0cb" stroke="none"/><circle cx="2691.9" cy="771.4" r="2.9" fill="#5aa0cb" stroke-width="2.2"/><circle cx="2705.1" cy="771.4" r="2.9" fill="#5aa0cb" stroke-width="2.2"/>
<path d="M2704.2 862.4 L2707.1 864.3 L2710.1 862.4 L2713.2 864.3 L2716.2 862.4 L2719.3 864.3 L2722.3 862.4 L2724.5 863.8 V887.8 L2722.3 889.1 L2719.3 887.3 L2716.2 889.1 L2713.2 887.3 L2710.1 889.1 L2707.1 887.3 L2704.2 889.1 Z" fill="#fff" stroke="#fff" stroke-width="0.8"/>
<path d="M2709.2 870.4 H2719.8 M2709.2 875.4 H2719.8 M2709.2 880.4 H2719.8" stroke="#5aa1cc" stroke-width="2" />
<g stroke="#9a2b41">
<path d="M2690.3 978.3 H2712.7" stroke-width="2.6"/>
<path d="M2695.7 977.5 L2697.2 974.6 a2 2 0 0 1 1.8 -1.1 H2704.5 a2 2 0 0 1 1.8 1.1 L2707.8 977.5" stroke-width="2.4"/>
<path d="M2692.4 979.6 V995.2 a3.4 3.4 0 0 0 3.4 3.4 H2707.3 a3.4 3.4 0 0 0 3.4 -3.4 V979.6" stroke-width="2.7"/>
<path d="M2697.3 983 V994.2 M2701.4 983 V994.2 M2705.6 983 V994.2" stroke-width="1.9"/>
</g>
</svg>
</body></html>
